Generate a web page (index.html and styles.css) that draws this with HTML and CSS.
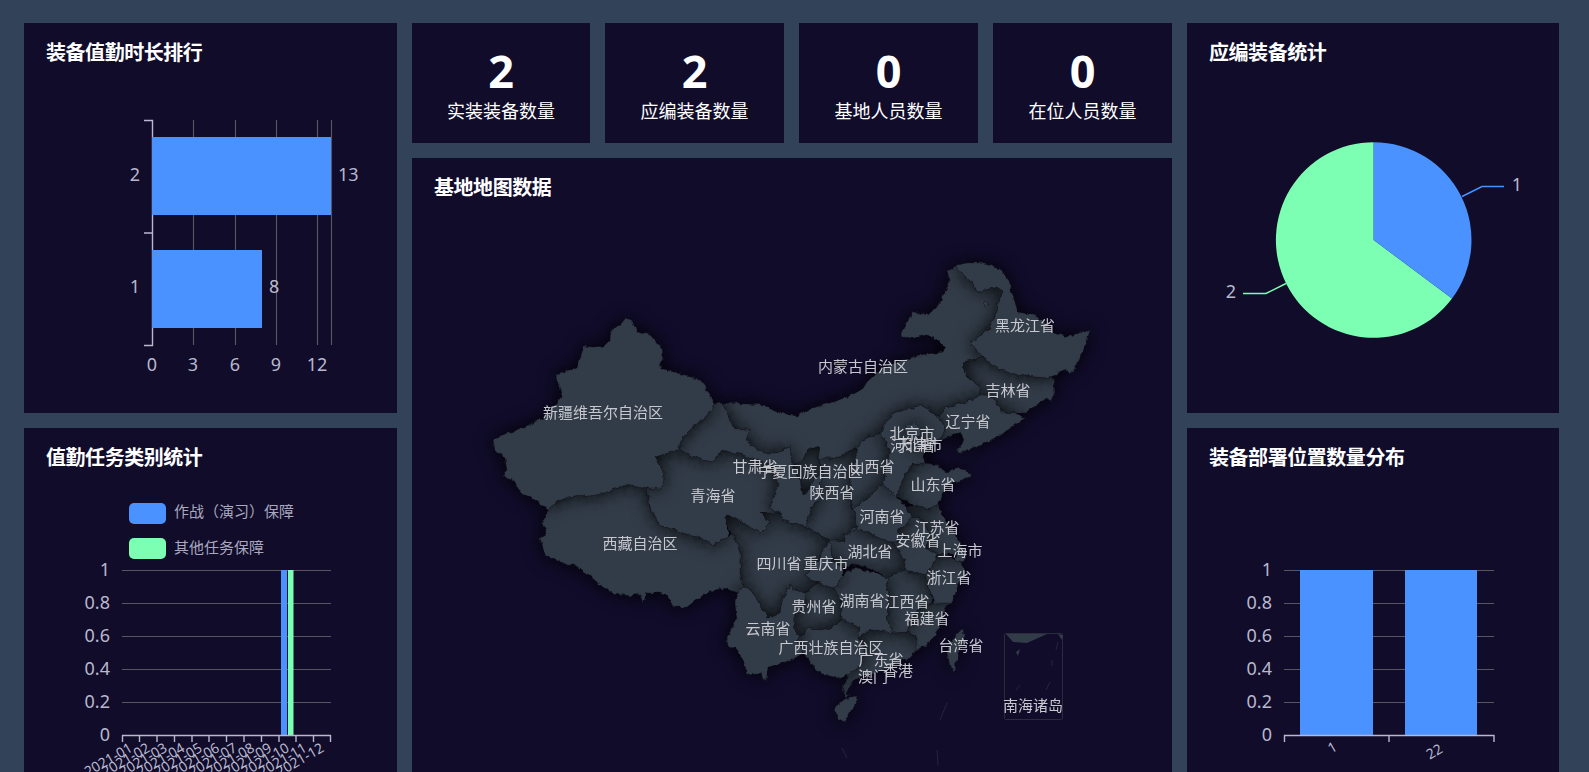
FILE: index.html
```html
<!DOCTYPE html>
<html lang="zh-CN">

<head>
    <meta charset="UTF-8">
    <title>基地数据看板</title>
    <link rel="stylesheet" href="styles.css">
</head>

<body>
    <div class="board">
        <div class="col">
            <div class="panel">
                <h2 class="title">装备值勤时长排行</h2>
                <svg class="chart" width="373" height="347" viewBox="24 66 373 347">
                    <line class="split" x1="193.5" y1="120" x2="193.5" y2="345"></line>
                    <line class="split" x1="235.5" y1="120" x2="235.5" y2="345"></line>
                    <line class="split" x1="276.5" y1="120" x2="276.5" y2="345"></line>
                    <line class="split" x1="317.5" y1="120" x2="317.5" y2="345"></line>
                    <line class="split" x1="331.5" y1="120" x2="331.5" y2="345"></line>
                    <path class="axis" d="M144 120.5H152.5V345.5H144M144 233H152.5"></path>
                    <rect class="blue" x="152" y="137" width="179" height="78"></rect>
                    <rect class="blue" x="152" y="250" width="110" height="78"></rect>
                    <text class="tick end" x="140" y="174">2</text>
                    <text class="tick end" x="140" y="286">1</text>
                    <text class="tick" x="338" y="174">13</text>
                    <text class="tick" x="269" y="286">8</text>
                    <text class="tick mid" x="152" y="364">0</text>
                    <text class="tick mid" x="193" y="364">3</text>
                    <text class="tick mid" x="235" y="364">6</text>
                    <text class="tick mid" x="276" y="364">9</text>
                    <text class="tick mid" x="317" y="364">12</text>
                </svg>
            </div>
            <div class="panel">
                <h2 class="title">值勤任务类别统计</h2>
                <svg class="chart" width="373" height="347" viewBox="24 471 373 347">
                    <rect class="blue" x="129" y="503" width="37" height="21" rx="5"></rect>
                    <text class="legend" x="174" y="511">作战（演习）保障</text>
                    <rect class="green" x="129" y="538" width="37" height="21" rx="5"></rect>
                    <text class="legend" x="174" y="547">其他任务保障</text>
                    <path class="split" d="M122 570.5H331M122 603.5H331M122 636.5H331M122 669.5H331M122 702.5H331"></path>
                    <rect class="blue" x="281" y="570" width="6" height="165"></rect>
                    <rect class="green" x="288" y="570" width="5.5" height="165"></rect>
                    <path class="axis" d="M122 735.5H331M122.5 735V742M139.5 735V742M157 735V742M174.5 735V742M192 735V742M209 735V742M226.5 735V742M244 735V742M261.5 735V742M279 735V742M296 735V742M313.5 735V742M330.5 735V742"></path>
                    <text class="tick end" x="110" y="569">1</text>
                    <text class="tick end" x="110" y="602">0.8</text>
                    <text class="tick end" x="110" y="635">0.6</text>
                    <text class="tick end" x="110" y="668">0.4</text>
                    <text class="tick end" x="110" y="701">0.2</text>
                    <text class="tick end" x="110" y="734">0</text>
                    <text class="cat" transform="rotate(-30 130.7 746)" x="130.7" y="746">2021-01</text>
                    <text class="cat" transform="rotate(-30 148.1 746)" x="148.1" y="746">2021-02</text>
                    <text class="cat" transform="rotate(-30 165.5 746)" x="165.5" y="746">2021-03</text>
                    <text class="cat" transform="rotate(-30 183 746)" x="183" y="746">2021-04</text>
                    <text class="cat" transform="rotate(-30 200.4 746)" x="200.4" y="746">2021-05</text>
                    <text class="cat" transform="rotate(-30 217.8 746)" x="217.8" y="746">2021-06</text>
                    <text class="cat" transform="rotate(-30 235.2 746)" x="235.2" y="746">2021-07</text>
                    <text class="cat" transform="rotate(-30 252.6 746)" x="252.6" y="746">2021-08</text>
                    <text class="cat" transform="rotate(-30 270 746)" x="270" y="746">2021-09</text>
                    <text class="cat" transform="rotate(-30 287.5 746)" x="287.5" y="746">2021-10</text>
                    <text class="cat" transform="rotate(-30 304.9 746)" x="304.9" y="746">2021-11</text>
                    <text class="cat" transform="rotate(-30 322.3 746)" x="322.3" y="746">2021-12</text>
                </svg>
            </div>
        </div>

        <div class="col">
            <div class="kpis">
                <div class="panel kpi"><div class="num">2</div><div class="label">实装装备数量</div></div>
                <div class="panel kpi"><div class="num">2</div><div class="label">应编装备数量</div></div>
                <div class="panel kpi"><div class="num">0</div><div class="label">基地人员数量</div></div>
                <div class="panel kpi"><div class="num">0</div><div class="label">在位人员数量</div></div>
            </div>
            <div class="panel map">
                <h2 class="title">基地地图数据</h2>
                <svg class="chart" width="760" height="617" viewBox="412 201 760 617">
                    <defs>
                        <!-- roughens the hand traced borders a little, they are too straight otherwise -->
                        <filter id="rough" filterUnits="userSpaceOnUse" x="412" y="201" width="760" height="617" color-interpolation-filters="sRGB">
                            <feTurbulence type="fractalNoise" baseFrequency="0.18" numOctaves="2" seed="4" result="noise"></feTurbulence>
                            <feDisplacementMap in="SourceGraphic" in2="noise" scale="5" xChannelSelector="R" yChannelSelector="G"></feDisplacementMap>
                        </filter>
                    </defs>
                    <g filter="url(#rough)">
                        <!-- drawn back to front, each province throws its shadow on the ones before it -->
                        <polygon class="prov" points="727,515 743,523 760,533 770,523 760,513 780,513 783,520 805,527 830,540 815,565 805,575 812,580 818,582 805,593 795,590 790,585 788,590 783,597 780,613 768,618 757,600 748,588 743,587 740,578 740,553 733,535 725,523"></polygon>
                        <polygon class="prov" points="813,447 820,447 818,458 824,473 815,478 808,492 803,495 800,480 795,470 792,465 803,460 807,450"></polygon>
                        <polygon class="prov" points="548,510 555,502 578,495 590,497 607,492 627,484 647,488 650,507 660,525 683,533 700,538 713,545 727,537 733,535 740,553 740,578 743,587 737,592 727,588 710,592 700,597 687,607 673,607 668,596 660,593 647,593 643,603 640,594 630,596 613,593 605,588 592,578 575,565 567,565 545,555 540,538 547,533 543,523"></polygon>
                        <polygon class="prov" points="678,450 697,458 713,462 722,450 737,453 752,458 772,465 778,483 775,495 770,508 780,513 760,513 770,523 760,533 743,523 727,515 725,523 730,535 727,537 713,545 700,538 683,533 660,525 650,507 647,488 662,488 664,478 662,470 655,457"></polygon>
                        <polygon class="prov" points="867,632 877,630 893,633 907,632 917,635 917,650 910,658 897,663 883,670 860,677 850,683 847,693 850,695 846,697 843,690 848,675 860,665 865,655 863,645 858,638"></polygon>
                        <polygon class="prov" points="805,593 818,582 833,588 842,600 842,620 832,627 820,630 810,628 800,637 793,627 795,613 805,605"></polygon>
                        <polygon class="prov" points="907,632 912,617 920,607 933,602 950,603 943,613 940,627 930,642 917,650 917,635"></polygon>
                        <polygon class="prov" points="963,362 983,357 997,368 1015,375 1047,378 1053,377 1055,393 1052,402 1047,398 1038,404 1026,413 1015,413 1002,412 993,398 980,395 980,387 967,377"></polygon>
                        <polygon class="prov" points="858,447 855,463 850,477 851,503 857,522 857,527 845,535 845,543 830,540 807,528 805,527 813,503 822,497 820,485 824,473 818,458 830,458 840,457 848,452"></polygon>
                        <polygon class="prov" points="714,404 723,403 747,404 763,405 780,413 797,416 813,408 840,400 862,390 867,382 880,370 897,362 920,355 943,352 945,348 937,340 927,335 913,338 903,337 902,333 913,312 928,315 940,303 950,280 947,272 957,265 962,275 973,282 977,292 997,287 1004,292 998,303 997,313 988,330 970,343 977,350 983,357 963,362 967,377 980,387 980,395 967,402 947,407 937,417 923,405 897,412 887,420 880,433 863,440 858,447 848,452 840,457 830,458 818,458 820,447 813,447 807,450 803,460 792,465 790,447 775,453 762,453 745,440 750,430 735,430 727,413 722,403"></polygon>
                        <polygon class="prov" points="858,447 863,440 880,433 885,440 890,450 883,483 867,500 853,508 851,503 850,477 855,463"></polygon>
                        <polygon class="prov" points="714,404 722,403 727,413 735,430 750,430 745,440 762,453 775,453 790,447 792,465 795,470 800,480 803,495 808,492 815,478 824,473 820,485 822,497 813,503 805,527 783,520 780,513 770,508 775,495 778,483 772,465 752,458 737,453 722,450 713,462 697,458 678,450 682,438 693,427 710,413"></polygon>
                        <polygon class="prov" points="800,637 810,628 820,630 832,627 842,620 860,627 858,638 863,645 865,655 860,665 848,675 837,678 820,673 813,665 803,653 797,640"></polygon>
                        <polygon class="prov" points="845,535 860,528 880,538 893,543 898,548 905,560 905,570 887,578 870,568 853,565 842,568 832,560 830,540 845,543"></polygon>
                        <polygon class="prov" points="887,578 905,570 925,575 930,590 933,602 920,607 912,617 907,632 893,633 887,620 888,603"></polygon>
                        <polygon class="prov" points="932,565 937,555 945,553 955,560 962,562 965,575 958,585 955,595 950,603 935,603 930,590 925,575"></polygon>
                        <polygon class="prov" points="915,505 927,510 938,503 942,515 953,530 960,543 965,553 957,555 945,553 937,555 925,548 930,535 922,520 912,517 907,508"></polygon>
                        <polygon class="prov" points="625,319 633,322 637,332 650,335 662,348 663,357 660,368 677,373 693,377 704,384 714,404 710,413 693,427 682,438 678,450 655,457 662,470 664,478 662,488 647,488 627,484 607,492 590,497 578,495 555,502 548,510 537,501 520,492 515,482 502,475 507,470 505,458 493,447 495,438 512,432 522,428 543,418 558,403 562,393 556,374 577,368 584,346 602,348 610,340 611,330 620,325"></polygon>
                        <polygon class="prov" points="902,480 913,463 925,463 937,465 947,473 957,467 972,474 963,480 950,483 945,488 938,503 927,510 915,505 897,497"></polygon>
                        <polygon class="prov" points="912,517 922,520 930,535 925,548 937,555 932,565 925,575 915,572 905,570 905,560 898,548 893,543 905,537 897,532"></polygon>
                        <polygon class="prov" points="842,577 853,568 872,572 887,578 888,603 887,620 893,633 877,630 867,632 858,638 860,627 842,620 842,600 833,588"></polygon>
                        <polygon class="prov" points="957,265 967,263 980,263 1000,268 1008,280 1012,293 1018,312 1033,315 1045,323 1053,333 1068,337 1090,329 1087,342 1082,353 1073,372 1062,370 1053,377 1047,378 1015,375 997,368 983,357 977,350 970,343 988,330 997,313 998,303 1004,292 997,287 977,292 973,282 962,275"></polygon>
                        <polygon class="prov" points="980,395 993,398 1002,412 1015,413 1025,418 1000,435 987,442 960,453 957,451 965,440 960,432 947,438 937,442 945,428 937,417 947,407 967,402"></polygon>
                        <polygon class="prov" points="737,592 735,603 737,620 727,637 728,647 735,648 743,660 748,675 762,673 766,682 768,667 783,663 795,658 803,653 797,640 800,637 793,627 795,613 805,605 805,593 795,590 790,585 788,590 783,597 780,613 768,618 757,600 748,588 743,587"></polygon>
                        <polygon class="prov" points="853,508 867,500 883,483 897,497 907,508 912,517 897,532 905,537 893,543 880,538 860,528 845,535 857,527 857,522"></polygon>
                        <polygon class="prov" points="880,433 887,420 897,412 923,405 937,417 945,428 937,442 928,450 923,457 925,463 913,463 902,480 897,497 883,483 890,450 885,440"></polygon>
                        <polygon class="prov" points="830,540 832,560 842,568 842,577 833,588 818,582 812,580 805,575 815,565"></polygon>
                        <polygon class="prov" points="957,555 965,553 964,562 955,560"></polygon>
                        <polygon class="prov" points="920,435 925,440 928,450 922,455 916,448 917,440"></polygon>
                        <polygon class="prov" points="905,428 915,422 922,430 915,440 906,438"></polygon>
                        <polygon class="prov" points="835,707 845,699 858,697 853,708 845,722 837,718"></polygon>
                        <polygon class="prov" points="957,635 963,629 964,635 958,657 953,673 950,665 947,653 950,643"></polygon>
                        <polygon class="lake" points="984,302 988,301 989,305 985,306"></polygon>
                    </g>
                    <rect class="sea-box" x="1004.5" y="633.5" width="58" height="86" rx="1"></rect>
                    <polygon class="isle" points="1006,634 1013,642 1027,643 1047,634"></polygon>
                    <polygon class="isle" points="1058,634 1063,635 1062,640"></polygon>
                    <polygon class="isle" points="1016,652 1020,649 1018,656"></polygon>
                    <path class="dash" d="M1052 660V666M1050 682L1046 690M1020 685L1016 690M1012 700V706M1044 700L1038 708M1058 642L1056 650M940 720L947 703M842 748L847 758M937 750L938 765"></path>

                    <text class="geo" x="603" y="413">新疆维吾尔自治区</text>
                    <text class="geo" x="755" y="467">甘肃省</text>
                    <text class="geo" x="810" y="472">宁夏回族自治区</text>
                    <text class="geo" x="713" y="496">青海省</text>
                    <text class="geo" x="640" y="544">西藏自治区</text>
                    <text class="geo" x="863" y="367">内蒙古自治区</text>
                    <text class="geo" x="1025" y="326">黑龙江省</text>
                    <text class="geo" x="1008" y="391">吉林省</text>
                    <text class="geo" x="968" y="422">辽宁省</text>
                    <text class="geo" x="912" y="434">北京市</text>
                    <text class="geo" x="920" y="445">天津市</text>
                    <text class="geo" x="913" y="446">河北省</text>
                    <text class="geo" x="872" y="467">山西省</text>
                    <text class="geo" x="933" y="485">山东省</text>
                    <text class="geo" x="832" y="493">陕西省</text>
                    <text class="geo" x="882" y="517">河南省</text>
                    <text class="geo" x="937" y="528">江苏省</text>
                    <text class="geo" x="918" y="541">安徽省</text>
                    <text class="geo" x="960" y="551">上海市</text>
                    <text class="geo" x="870" y="552">湖北省</text>
                    <text class="geo" x="779" y="564">四川省</text>
                    <text class="geo" x="826" y="564">重庆市</text>
                    <text class="geo" x="949" y="578">浙江省</text>
                    <text class="geo" x="814" y="607">贵州省</text>
                    <text class="geo" x="862" y="601">湖南省</text>
                    <text class="geo" x="907" y="602">江西省</text>
                    <text class="geo" x="927" y="619">福建省</text>
                    <text class="geo" x="768" y="629">云南省</text>
                    <text class="geo" x="961" y="646">台湾省</text>
                    <text class="geo" x="831" y="648">广西壮族自治区</text>
                    <text class="geo" x="881" y="660">广东省</text>
                    <text class="geo" x="898" y="671">香港</text>
                    <text class="geo" x="873" y="677">澳门</text>
                    <text class="geo" x="1033" y="706">南海诸岛</text>
                </svg>
            </div>
        </div>

        <div class="col">
            <div class="panel">
                <h2 class="title">应编装备统计</h2>
                <svg class="chart" width="372" height="347" viewBox="1187 66 372 347">
                    <path class="green" d="M1373.7 240V142.2A97.8 97.8 0 1 0 1452 298.6Z"></path>
                    <path class="blue" d="M1373.7 240V142.2A97.8 97.8 0 0 1 1452 298.6Z"></path>
                    <polyline class="lead-blue" points="1462,196.5 1482,186.5 1504,186.5"></polyline>
                    <polyline class="lead-green" points="1286,283.5 1266,293.5 1243,293.5"></polyline>
                    <text class="tick mid" x="1517" y="184">1</text>
                    <text class="tick mid" x="1231" y="291">2</text>
                </svg>
            </div>
            <div class="panel">
                <h2 class="title">装备部署位置数量分布</h2>
                <svg class="chart" width="372" height="347" viewBox="1187 471 372 347">
                    <path class="split" d="M1284 570.5H1494M1284 603.5H1494M1284 636.5H1494M1284 669.5H1494M1284 702.5H1494"></path>
                    <rect class="blue" x="1300" y="570" width="73" height="165"></rect>
                    <rect class="blue" x="1405" y="570" width="72" height="165"></rect>
                    <path class="axis" d="M1284 735.5H1494.5M1284.5 735V742M1389 735V742M1494 735V742"></path>
                    <text class="tick end" x="1272" y="569">1</text>
                    <text class="tick end" x="1272" y="602">0.8</text>
                    <text class="tick end" x="1272" y="635">0.6</text>
                    <text class="tick end" x="1272" y="668">0.4</text>
                    <text class="tick end" x="1272" y="701">0.2</text>
                    <text class="tick end" x="1272" y="734">0</text>
                    <text class="cat-mid" transform="rotate(-30 1332 747)" x="1332" y="747">1</text>
                    <text class="cat-mid" transform="rotate(-30 1434 751)" x="1434" y="751">22</text>
                </svg>
            </div>
        </div>
    </div>
</body>

</html>
```

FILE: styles.css
```css
html,
body {
    margin: 0;
    height: 772px;
    overflow: hidden;
    background-color: #324359;
}

body {
    font-family: "Noto Sans", "Noto Sans CJK SC", sans-serif;
}

.board {
    display: grid;
    grid-template-columns: 373px 760px 372px;
    gap: 15px;
    padding: 23px 30px 0 24px;
}

.col {
    display: flex;
    flex-direction: column;
    gap: 15px;
}

.panel {
    height: 390px;
    background-color: #100c2a;
}

.title {
    margin: 0;
    padding: 15px 22px 0;
    height: 28px;
    line-height: 30px;
    font-size: 20px;
    font-weight: 700;
    letter-spacing: -0.45px;
    color: #fff;
}

.chart {
    display: block;
}

.kpis {
    display: grid;
    grid-template-columns: 178px 179px 179px 179px;
    gap: 15px;
}

.kpi {
    height: 98px;
    padding-top: 22px;
    text-align: center;
    color: #fff;
}

.num {
    height: 52px;
    line-height: 52px;
    font-size: 45px;
    font-weight: 700;
}

.label {
    height: 28px;
    line-height: 28px;
    font-size: 18px;
}

.map {
    height: 660px;
}

.split {
    fill: none;
    stroke: #565561;
    stroke-width: 1.2;
}

.axis {
    fill: none;
    stroke: #b9b8ce;
    stroke-width: 1.4;
}

.blue {
    fill: #4992ff;
}

.green {
    fill: #7cffb2;
}

.lead-blue,
.lead-green {
    fill: none;
    stroke-width: 1.5;
}

.lead-blue {
    stroke: #4992ff;
}

.lead-green {
    stroke: #7cffb2;
}

.tick,
.legend,
.cat,
.cat-mid,
.geo {
    font-family: "Noto Sans", "Noto Sans CJK SC", sans-serif;
    dominant-baseline: central;
}

.tick {
    font-size: 18px;
    fill: #b9b8ce;
}

.tick.end {
    text-anchor: end;
}

.tick.mid {
    text-anchor: middle;
}

.legend {
    font-size: 15px;
    fill: #a9a8bf;
}

.cat {
    font-size: 14px;
    fill: #b9b8ce;
    text-anchor: end;
}

.cat-mid {
    font-size: 14px;
    fill: #b9b8ce;
    text-anchor: middle;
}

/* map */
.prov {
    fill: #323c48;
    stroke: #14151f;
    stroke-width: 0.4;
    filter: drop-shadow(0 0 9px rgba(0, 0, 0, 0.9));
}

.lake {
    fill: #323c48;
    stroke: #14151f;
    stroke-width: 0.5;
}

.sea-box {
    fill: none;
    stroke: #2c2b3e;
    stroke-width: 1;
}

.isle {
    fill: #323c48;
}

.dash {
    fill: none;
    stroke: #25263c;
    stroke-width: 1;
}

.geo {
    font-size: 15px;
    fill: #c8c8cf;
    text-anchor: middle;
    transform: translateY(-1px);
}
```
